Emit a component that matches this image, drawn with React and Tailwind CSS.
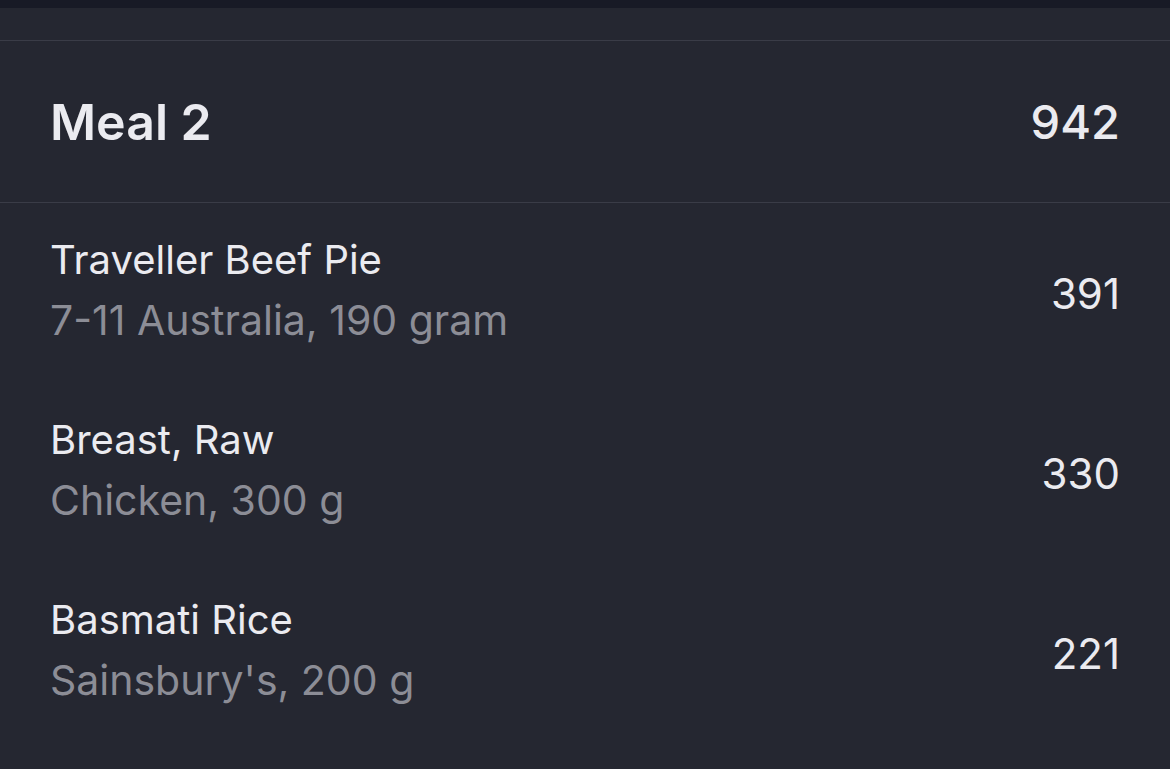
import React from 'react';

const items = [
    { name: 'Traveller Beef Pie', detail: '7-11 Australia, 190 gram', kcal: 391 },
    { name: 'Breast, Raw', detail: 'Chicken, 300 g', kcal: 330 },
    { name: 'Basmati Rice', detail: "Sainsbury's, 200 g", kcal: 221 },
];

const Row = ({ name, detail, kcal }) => (
    <div className="flex items-center justify-between pl-[50px] pr-[50px] pt-[27px] pb-[33px]">
        <div className="flex flex-col">
            <span className="text-[40px] leading-[60px] text-[#ebebf0]">{name}</span>
            <span className="text-[41px] leading-[60px] text-[#8c8d96]">{detail}</span>
        </div>
        <span className="text-[42px] leading-[60px] text-[#ebebf0] pt-[8px]">{kcal}</span>
    </div>
);

export default function App() {
    return (
        <div className="w-[1170px] h-[769px] overflow-hidden bg-[#252731] font-['Inter','Noto_Sans',sans-serif]">
            {/* barra superior */}
            <div className="h-[8px] bg-[#181a26]" />
            <div className="h-[33px] border-b border-[#3a3c47]" />

            {/* cabecera de la comida */}
            <div className="h-[162px] flex items-center justify-between px-[50px] border-b border-[#3a3c47]">
                <span className="text-[50px] font-semibold text-[#ebebf0] pt-[2px]">Meal 2</span>
                <span className="text-[47px] font-medium text-[#ebebf0] pt-[2px]">942</span>
            </div>

            {items.map(it => <Row key={it.name} {...it} />)}
        </div>
    );
}
